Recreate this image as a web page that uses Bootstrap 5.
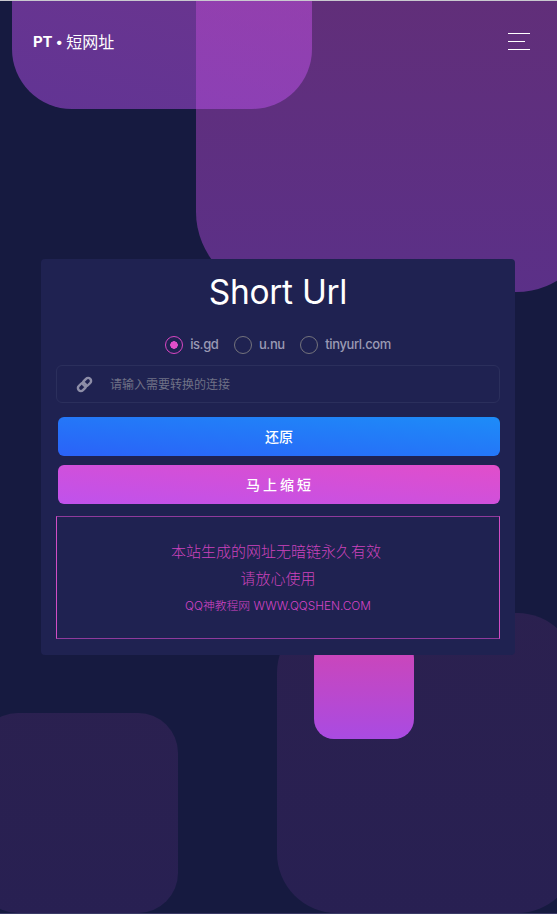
<!doctype html>
<html lang="zh-CN">
<head>
<meta charset="utf-8">
<title>PT • 短网址</title>
<link rel="stylesheet" href="https://cdn.jsdelivr.net/npm/bootstrap@5.3.0/dist/css/bootstrap.min.css">
<style>
html,body{height:100%;margin:0;background:#161a40;}
body{font-family:"Inter","Noto Sans CJK SC",sans-serif;}
.stage{position:relative;height:914px;overflow:hidden;background:#161a40;border-top:1px solid #c9c9cf;border-bottom:1px solid #3a3a66;}
.blob{position:absolute;}
.blob-a{left:196px;top:-109px;width:400px;height:400px;border-radius:80px;background:linear-gradient(to bottom,rgba(225,78,200,.38),rgba(204,84,253,.38));}
.blob-b{left:12px;top:-192px;width:300px;height:300px;border-radius:60px;background:linear-gradient(15deg,rgba(190,84,250,.45),rgba(226,86,226,.45));}
.blob-c{left:314px;top:637px;width:100px;height:101px;border-radius:20px;background:linear-gradient(to bottom,#d045b4,#a94be2);}
.blob-d{left:277px;top:612px;width:300px;height:300px;border-radius:60px;background:linear-gradient(to bottom,rgba(195,78,190,.12),rgba(170,76,214,.12));}
.blob-e{left:-22px;top:712px;width:200px;height:200px;border-radius:40px;background:linear-gradient(to bottom,rgba(190,78,195,.12),rgba(170,76,214,.12));}
.top-bar{position:relative;z-index:3;padding:0 27px 0 33px;height:81px;}
.brand-txt{font-size:16px;color:#fff;padding:0;margin:0;line-height:1;display:flex;align-items:center;}
.brand-txt b{font-weight:700;font-size:15px;letter-spacing:-.2px;}
.brand-dot{margin:0 3px 0 3px;font-size:14px;}
.burger{display:flex;flex-direction:column;gap:7px;width:22px;padding:0;border:0;background:none;margin-top:-1px;}
.burger i{display:block;height:1px;background:#fff;width:22px;}
.burger i:nth-child(2){width:17px;}
.panel{position:relative;z-index:2;margin:177px 42px 0 41px;background:#1f2251;border:0;border-radius:4px;padding:0 15px 16px;height:396px;}
.panel-title{font-family:"Inter",sans-serif;font-size:33.5px;font-weight:400;color:#fff;text-align:center;margin:0;line-height:40px;padding-top:13px;letter-spacing:-.3px;}
.pick-row{gap:15.5px;margin-top:21px;height:24px;}
.pick{display:flex;align-items:center;gap:7px;margin:0;padding:0;min-height:0;}
.pick .form-check-input{appearance:none;width:18px;height:18px;margin:0;float:none;background:transparent;border:1px solid #74737c;border-radius:50%;}
.pick .form-check-input:checked{border-color:#d946c3;background:radial-gradient(circle,#e14eca 0 3.5px,transparent 4px);box-shadow:none;}
.pick label{font-size:13px;color:#9a9ab4;letter-spacing:-.4px;font-weight:500;}
.link-box{margin-top:8px;height:38px;border:1px solid #2b2f5c;border-radius:6px;padding:0 0 0 19px;align-items:center;flex-wrap:nowrap;}
.link-box svg{flex:none;}
.link-box input{background:transparent;border:0;box-shadow:none;padding:0 0 0 18px;font-size:12px;color:#fff;height:36px;}
.link-box input::placeholder{color:#6f7186;}
.link-box input:focus{background:transparent;box-shadow:none;color:#fff;}
.act-stack{gap:9px;margin:14px 0 0 2px;}
.act{height:39px;border:0;border-radius:6px;color:#fff;font-size:14px;font-weight:500;padding:0;line-height:39px;}
.act-blue{background:linear-gradient(to top right,#2b62f8,#1d8cf8);}
.act-pink{background:linear-gradient(to top right,#bf52ec,#e14eca);letter-spacing:3px;padding-left:2px;}
.note-box{margin-top:12px;height:123px;border:1px solid #d14dc4;border-top-color:#8f3a9c;border-bottom-color:#8f3a9c;text-align:center;color:#cc42bc;padding-top:21px;}
.note-box p{margin:0;font-size:15px;line-height:27px;font-weight:300;}
.note-box .note-first{padding-right:4px;}
.note-box .note-sm{font-size:11.8px;color:#d544c6;line-height:27px;margin-top:1px;}
</style>
</head>
<body>
<div class="stage">
  <div class="blob blob-a"></div>
  <div class="blob blob-d"></div>
  <div class="blob blob-e"></div>
  <div class="blob blob-c"></div>
  <div class="blob blob-b"></div>
  <nav class="navbar top-bar d-flex justify-content-between align-items-center flex-nowrap">
    <a class="navbar-brand brand-txt" href="#"><b>PT</b><span class="brand-dot">•</span>短网址</a>
    <button class="burger" type="button" aria-label="菜单"><i></i><i></i><i></i></button>
  </nav>
  <main class="card panel">
    <h1 class="panel-title">Short Url</h1>
    <div class="d-flex justify-content-center pick-row">
      <div class="form-check pick"><input class="form-check-input" type="radio" name="svc" id="s1" checked><label for="s1">is.gd</label></div>
      <div class="form-check pick"><input class="form-check-input" type="radio" name="svc" id="s2"><label for="s2">u.nu</label></div>
      <div class="form-check pick"><input class="form-check-input" type="radio" name="svc" id="s3"><label for="s3">tinyurl.com</label></div>
    </div>
    <div class="input-group link-box">
      <svg width="17" height="17" viewBox="0 0 16 16" fill="none" stroke="#8e8ea8" stroke-width="2.3"><g transform="rotate(-45 8 8)"><rect x="0.4" y="5.2" width="8.6" height="5.6" rx="2.8"/><rect x="7" y="5.2" width="8.6" height="5.6" rx="2.8"/></g></svg>
      <input type="text" class="form-control" placeholder="请输入需要转换的连接">
    </div>
    <div class="d-grid act-stack">
      <button class="btn act act-blue" type="button">还原</button>
      <button class="btn act act-pink" type="button">马上缩短</button>
    </div>
    <div class="note-box">
      <p class="note-first">本站生成的网址无暗链永久有效</p>
      <p>请放心使用</p>
      <p class="note-sm">QQ神教程网 WWW.QQSHEN.COM</p>
    </div>
  </main>
</div>
<script src="https://cdn.jsdelivr.net/npm/bootstrap@5.3.0/dist/js/bootstrap.bundle.min.js"></script>
</body>
</html>
